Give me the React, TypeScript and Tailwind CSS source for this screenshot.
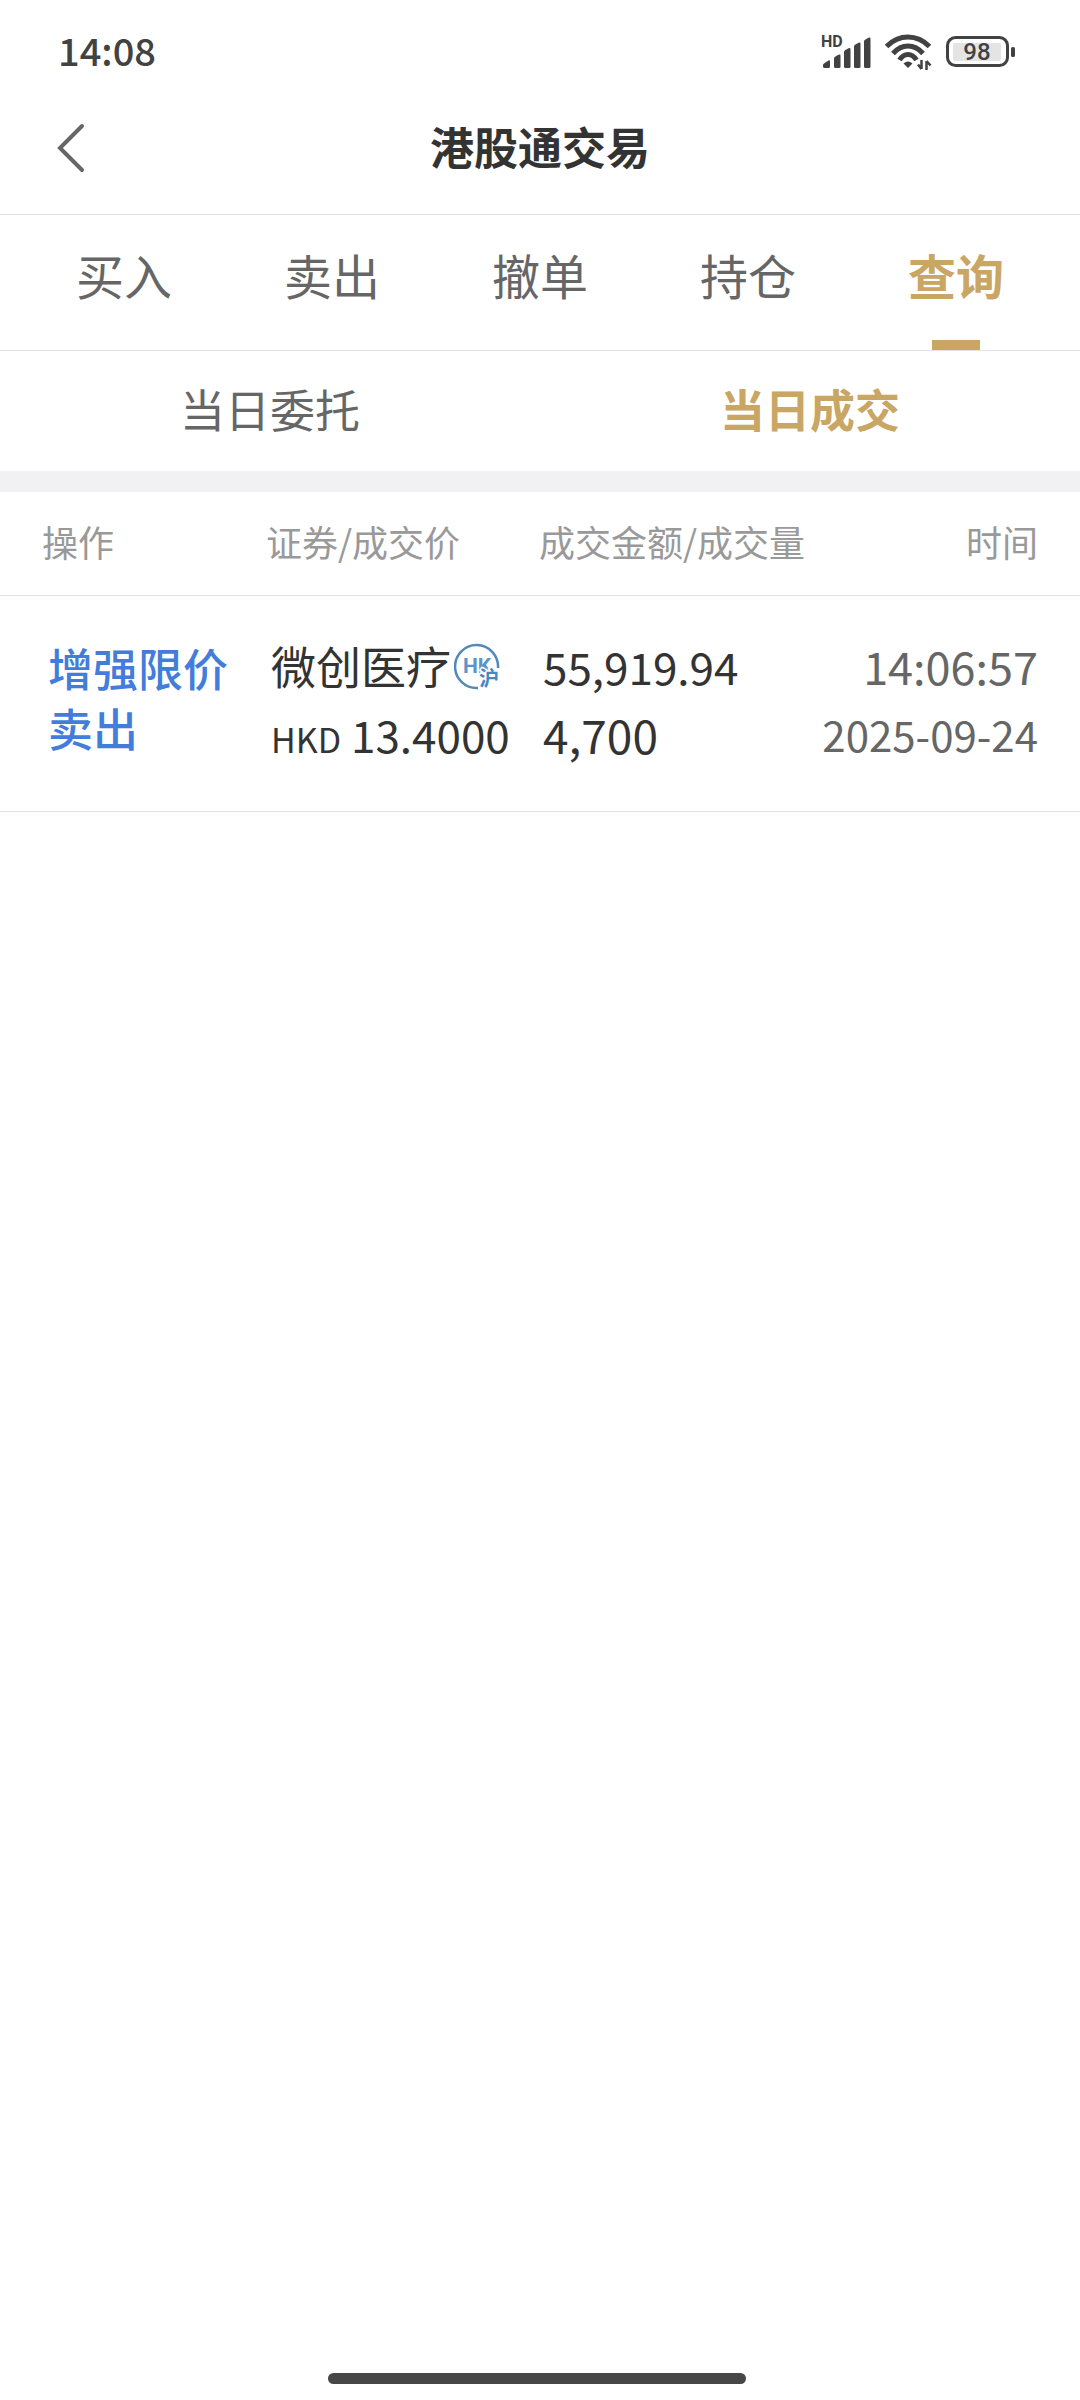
import React, { useState } from "react";

const mainTabs = ["买入", "卖出", "撤单", "持仓", "查询"];
const subTabs = ["当日委托", "当日成交"];

const trades = [
  {
    action: "增强限价卖出",
    name: "微创医疗",
    currency: "HKD",
    price: "13.4000",
    amount: "55,919.94",
    volume: "4,700",
    time: "14:06:57",
    date: "2025-09-24",
  },
];

function SignalIcon() {
  return (
    <svg width="50" height="40" viewBox="0 -2 50 40" fill="#424242" aria-label="HD">
      <text x="0" y="13" fontSize="16" fontWeight="700" fontFamily="Roboto, sans-serif">
        HD
      </text>
      <path d="M2 32.500V31q0-1 1-1.500l4.500-3q1.500-.6 1.500 1V32.500q0 1.500-1.500 1.500h-4q-1.500 0-1.500-1.500z" />
      <path d="M13 32.500V24.500q0-1 1-1.700l3.500-2q2-.8 2 1V32.500q0 1.500-1.500 1.500h-3.500q-1.500 0-1.500-1.500z" />
      <path d="M23 32.500V18q0-1 1-1.700l3.500-2q2-.8 2 1V32.500q0 1.500-1.500 1.500h-3.500q-1.500 0-1.500-1.500z" />
      <path d="M33 32.500V12.500q0-1 1-1.700l3.500-2q2-.8 2 1V32.500q0 1.500-1.500 1.500h-3.500q-1.500 0-1.500-1.500z" />
      <path d="M43 32.500V7.500q0-1 1-1.700l3.500-2q2-.8 2 1V32.500q0 1.500-1.500 1.500h-3.500q-1.500 0-1.500-1.500z" />
    </svg>
  );
}

function WifiIcon() {
  return (
    <svg width="47" height="36" viewBox="0 0 47 36" fill="none" stroke="#424242" aria-label="Wi-Fi">
      <path d="M1.500 12.500Q11 3 23 3t21.500 9.500" strokeWidth="5" />
      <path d="M8 19.500Q14.500 12 23 12t15 7.500" strokeWidth="5" />
      <path d="M14.500 26q3.500-5.500 8.500-5.500t8.500 5.500" strokeWidth="5" />
      <path d="M18.500 29.500q4.500-4 9 0L23 34z" fill="#424242" stroke="none" />
      <path d="M36.500 26v9M33 30.500l3.500 4.500M41.500 36v-9M41.500 27l4 4.500" strokeWidth="2.500" />
    </svg>
  );
}

function BatteryIcon() {
  return (
    <svg width="70" height="32" viewBox="0 0 70 32" aria-label="98%">
      <rect x="1.500" y="1.500" width="60" height="28" rx="8" fill="none" stroke="#424242" strokeWidth="3" />
      <rect x="7" y="7" width="48" height="18" rx="2" fill="#e4e4e4" />
      <rect x="65" y="11" width="4" height="10" rx="1.500" fill="#424242" />
      <text
        x="31"
        y="24"
        textAnchor="middle"
        fontSize="24"
        fontWeight="500"
        fill="#424242"
        fontFamily="Roboto, sans-serif"
      >
        98
      </text>
    </svg>
  );
}

function HkConnectBadge() {
  return (
    <svg className="ml-[3px] shrink-0" width="48" height="56" viewBox="0 -5 48 56" aria-label="HK沪">
      <path
        d="M44 25A21.500 21.500 0 1 0 24 45"
        fill="none"
        stroke="#5189bd"
        strokeWidth="2.500"
      />
      <text
        x="9"
        y="30"
        fontSize="21"
        fontWeight="700"
        fill="#5a94cb"
        fontFamily="Roboto, sans-serif"
      >
        HK
      </text>
      <text
        x="25"
        y="43"
        fontSize="20"
        fontWeight="700"
        fill="#4a86bd"
        stroke="#fff"
        strokeWidth="3"
        paintOrder="stroke"
        fontFamily="'Noto Sans CJK SC', sans-serif"
      >
        沪
      </text>
    </svg>
  );
}

export default function App() {
  const [tab, setTab] = useState("查询");
  const [sub, setSub] = useState("当日成交");

  return (
    <div className="flex min-h-screen flex-col bg-white font-['Noto_Sans_CJK_SC',sans-serif] text-[#333]">
      <div className="flex h-[78px] items-center justify-between pt-[26px] pr-16 pl-[58px]">
        <time className="pb-1 text-[38px] leading-none font-medium text-[#424242]">14:08</time>
        <div className="flex items-center gap-3.5">
          <SignalIcon />
          <WifiIcon />
          <BatteryIcon />
        </div>
      </div>

      <header className="grid h-[136px] grid-cols-[120px_1fr_120px] items-center">
        <button type="button" aria-label="返回" className="flex h-full items-center pt-1 pl-14">
          <svg width="30" height="50" viewBox="0 0 30 50" fill="none" stroke="#666" strokeWidth="4">
            <path d="M26 3L4 25l22 22" strokeLinecap="round" />
          </svg>
        </button>
        <h1 className="text-center text-[44px] leading-none font-bold">港股通交易</h1>
      </header>

      <nav className="flex border-y border-[#e2e2e2] px-5">
        {mainTabs.map((t) => (
          <button
            key={t}
            type="button"
            onClick={() => setTab(t)}
            className={
              "relative flex-1 pt-6 pb-10 text-[48px] leading-[71px] " +
              (t === tab ? "font-bold text-[#c9a663]" : "text-[#666]")
            }
          >
            {t}
            {t === tab && (
              <span className="absolute bottom-0 left-1/2 h-[10px] w-12 -translate-x-1/2 bg-[#c9a663]" />
            )}
          </button>
        ))}
      </nav>

      <nav className="flex border-b-[21px] border-[#f1f1f4]">
        {subTabs.map((t) => (
          <button
            key={t}
            type="button"
            onClick={() => setSub(t)}
            className={
              "flex-1 pt-[26px] pb-[30px] text-[45px] leading-[64px] " +
              (t === sub ? "font-bold text-[#c9a663]" : "text-[#666]")
            }
          >
            {t}
          </button>
        ))}
      </nav>

      <table className="w-full table-fixed border-collapse text-left">
        <thead>
          <tr className="h-[103px] border-b border-[#e2e2e2] text-[36px] leading-none text-[#999]">
            <th scope="col" className="w-[266px] pb-1 pl-[42px] font-normal">操作</th>
            <th scope="col" className="w-[273px] pb-1 font-normal">证券/成交价</th>
            <th scope="col" className="pb-1 font-normal">成交金额/成交量</th>
            <th scope="col" className="w-[230px] pr-[42px] pb-1 text-right font-normal">时间</th>
          </tr>
        </thead>
        <tbody>
          {trades.map((r) => (
            <tr key={r.time} className="h-[216px] border-b border-[#e2e2e2] align-top whitespace-nowrap">
              <td className="pt-[42px] pl-12 text-[45px] leading-[60px] font-medium whitespace-normal text-[#437ddc]">
                <div className="w-[184px]">{r.action}</div>
              </td>
              <td className="pt-9 pl-[5px]">
                <div className="flex h-[68px] items-center text-[45px]">
                  {r.name}
                  <HkConnectBadge />
                </div>
                <div className="text-[44px] leading-[68px]">
                  <span className="text-[34px]">{r.currency}</span> {r.price}
                </div>
              </td>
              <td className="pt-9 pl-1 leading-[68px]">
                <div className="text-[44px]">{r.amount}</div>
                <div className="text-[46px]">{r.volume}</div>
              </td>
              <td className="pt-9 pr-[42px] text-[#666]">
                <div className="flex flex-col items-end leading-[68px]">
                  <span className="text-[45px]">{r.time}</span>
                  <span className="text-[42px]">{r.date}</span>
                </div>
              </td>
            </tr>
          ))}
        </tbody>
      </table>

      <div className="mt-auto flex justify-center pr-1.5 pb-4">
        <div className="h-[11px] w-[418px] rounded-full bg-[#474747]" />
      </div>
    </div>
  );
}
